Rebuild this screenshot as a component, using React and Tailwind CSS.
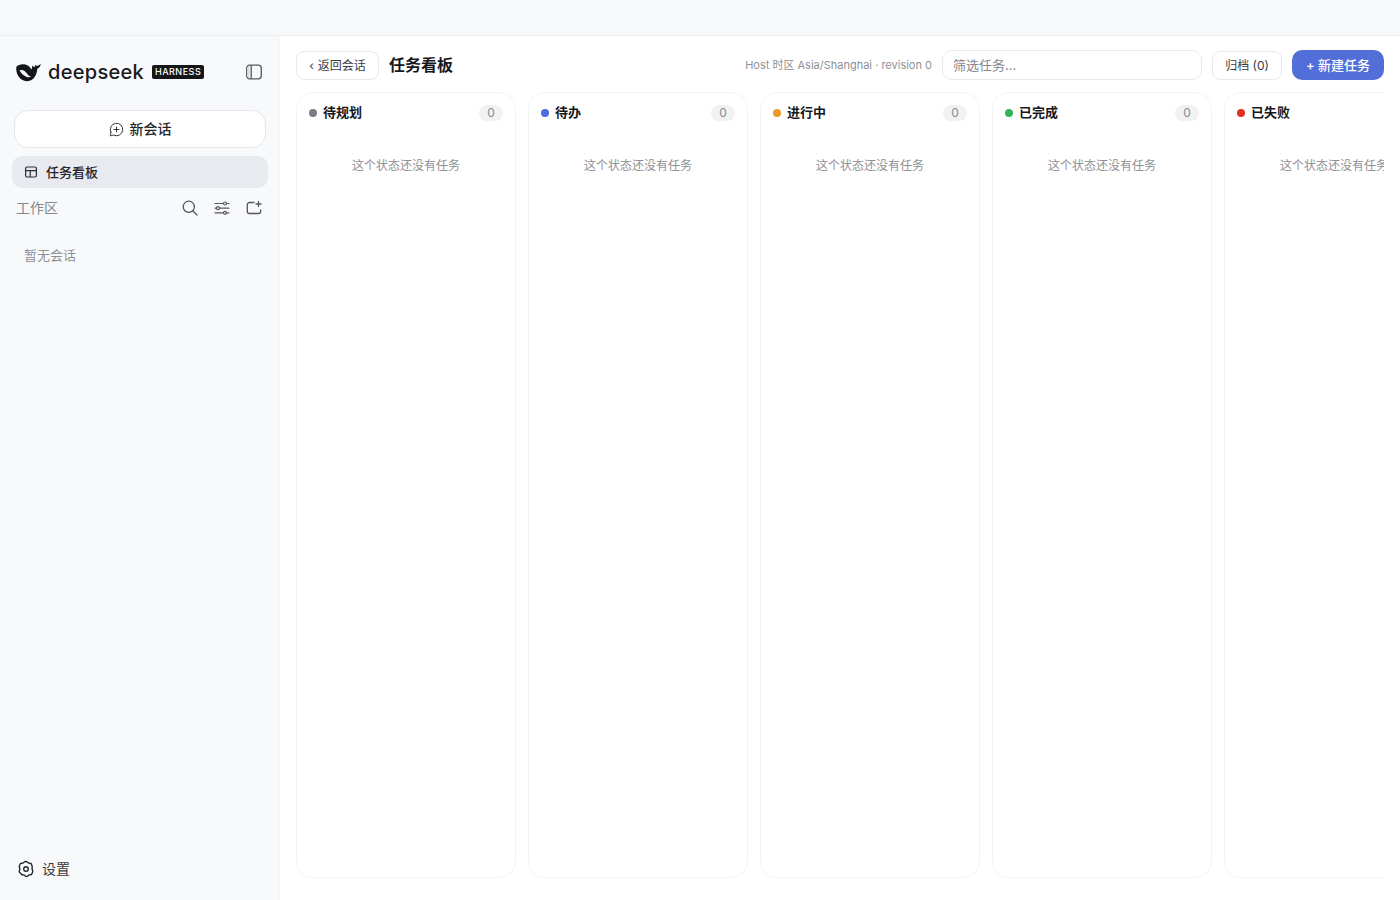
import React from 'react';
import { MessageCirclePlus } from 'lucide-react';

const FONT = "font-['Inter','Noto_Sans_CJK_SC',sans-serif]";

const columns = [
    { name: '待规划', dot: 'bg-[#7a7b85]' },
    { name: '待办', dot: 'bg-[#4f6bdc]' },
    { name: '进行中', dot: 'bg-[#ec9a2b]' },
    { name: '已完成', dot: 'bg-[#34b45a]' },
    { name: '已失败', dot: 'bg-[#e0301e]', noCount: true },
];

const WhaleLogo = () => (
    <svg width="25" height="20" viewBox="0 0 25 20" fill="none">
        <path d="M.3 5C2 2.800 5.800 1.800 9.300 2.600c2.900.7 4.800 2.400 6 4.800.8-1.200 1-2.600.7-3.900l2.300 1.800L19.500 3c.8.900 1.800 1.100 2.900.5L24.800 2c-.5 2.400-1.600 4-3.500 4.800-.2 5.400-3.500 12.400-10 12.400C5 19.200-.6 12.800.3 5Z" fill="#15161a" />
        <path d="M3.500 8.300c2.700-1 5.300.2 6.900 2.500 1.200 1.800 2.400 3.300 4.600 3.700-1.400.9-3.100 1-4.800.2C7.500 13.600 4.800 11.300 3.500 8.300Z" fill="#f7f8fb" />
    </svg>
);

const PanelIcon = () => (
    <svg width="18" height="18" viewBox="0 0 18 18" fill="none" stroke="#55565e" strokeWidth="1.300">
        <rect x="1.700" y="2.200" width="14.600" height="13.600" rx="3" />
        <path d="M6.200 2.500v13" />
        <path d="M3.400 4v10" strokeWidth="2.400" stroke="#dcdde1" />
    </svg>
);

const BoardIcon = () => (
    <svg width="14" height="14" viewBox="0 0 14 14" fill="none" stroke="#2c2d33" strokeWidth="1.200">
        <rect x="1.600" y="2" width="10.800" height="10" rx="1.500" />
        <path d="M1.600 5.600h10.800M6.200 5.600V12" />
    </svg>
);

const SearchIcon = () => (
    <svg width="18" height="18" viewBox="0 0 18 18" fill="none" stroke="#55565e" strokeWidth="1.300" strokeLinecap="round">
        <circle cx="7.800" cy="7.800" r="5.600" />
        <path d="M12 12l4 4" />
    </svg>
);

const FilterIcon = () => (
    <svg width="18" height="18" viewBox="0 0 18 18" fill="none" stroke="#55565e" strokeWidth="1.200" strokeLinecap="round">
        <path d="M2 4.500h8.500M13.500 4.500H16M2 9.200h1.500M6.500 9.200H16M2 13.800h8.500M13.500 13.800H16" />
        <circle cx="12" cy="4.500" r="1.500" />
        <circle cx="5" cy="9.200" r="1.500" />
        <circle cx="12" cy="13.800" r="1.500" />
    </svg>
);

const NewFolderIcon = () => (
    <svg width="18" height="18" viewBox="0 0 18 18" fill="none" stroke="#55565e" strokeWidth="1.300" strokeLinecap="round">
        <path d="M9 3.500H4.500A2.200 2.200 0 0 0 2.300 5.700v6.600a2.200 2.200 0 0 0 2.200 2.200h9a2.200 2.200 0 0 0 2.200-2.200V11" />
        <path d="M13.500 2.500v5M11 5h5" />
    </svg>
);

const GearIcon = () => (
    <svg width="18" height="18" viewBox="0 0 18 18" fill="none" stroke="#25262b" strokeWidth="1.400" strokeLinejoin="round">
        <path d="M9 1.500c.6 0 1 .3 1.500.7l1 .9 1.500.1c.6 0 1.100.4 1.300.9l.8 1.900c.2.500.2 1 0 1.400L15.100 9l.5 1.600c.2.500.2 1 0 1.400l-.8 1.900c-.2.500-.7.900-1.300.9l-1.500.1-1 .9c-.5.400-.9.700-1.500.7s-1-.3-1.500-.7l-1-.9-1.500-.1c-.6 0-1.100-.4-1.300-.9L2.400 12c-.2-.4-.2-.9 0-1.400L2.900 9l-.5-1.600c-.2-.4-.2-.9 0-1.400l.8-1.900c.2-.5.7-.9 1.300-.9L6 3.100l1-.9c.5-.4.9-.7 1.500-.7Z" />
        <circle cx="9" cy="9" r="2.300" />
    </svg>
);

const Column = ({ name, dot, noCount }) => (
    <div className="w-[220px] shrink-0 rounded-2xl border border-[#f3f4f5] bg-white">
        <div className="flex h-[39px] items-center pl-3 pr-3">
            <span className={`h-2 w-2 rounded-full ${dot}`} />
            <span className="ml-[6px] text-[13px] font-semibold text-[#17181c]">{name}</span>
            {!noCount && (
                <span className="ml-auto flex h-4 w-6 items-center justify-center rounded-full bg-[#f1f2f4] text-xs text-[#8a8b93]">0</span>
            )}
        </div>
        <div className="mt-6 whitespace-nowrap text-center text-xs leading-5 text-[#8f9096]">这个状态还没有任务</div>
    </div>
);

const App = () => {
    return (
        <div className={`flex h-[900px] w-[1400px] flex-col overflow-hidden bg-white ${FONT}`}>
            <div className="h-9 shrink-0 border-b border-[#eff0f2] bg-[#f7f8fa]" />
            <div className="flex min-h-0 flex-1">
                <aside className="flex w-[280px] shrink-0 flex-col border-r border-[#f3f4f6] bg-[#f8f9fb]">
                    <div className="mt-[24px] flex h-6 items-center pl-4 pr-4">
                        <WhaleLogo />
                        <span className="ml-[7px] text-xl font-medium leading-6 tracking-[0.3px] text-[#17181c]">deepseek</span>
                        <span className="ml-2 flex h-[14px] w-[52px] items-center justify-center rounded-[2px] bg-[#15161a] text-[9px] font-medium tracking-[0.5px] text-white">HARNESS</span>
                        <span className="ml-auto"><PanelIcon /></span>
                    </div>
                    <button className="ml-[14px] mr-[13px] mt-[26px] flex h-[38px] items-center justify-center gap-[6px] rounded-[14px] border border-[#e6e7ea] bg-white text-sm font-medium text-[#25262b]">
                        <MessageCirclePlus size={15} strokeWidth={1.500} />
                        新会话
                    </button>
                    <div className="ml-3 mr-[11px] mt-2 flex h-8 items-center gap-2 rounded-[10px] bg-[#e9eaef] pl-3 text-[13px] font-medium text-[#25262b]">
                        <BoardIcon />
                        <span className="pt-[1px]">任务看板</span>
                    </div>
                    <div className="mt-1 flex h-8 items-center pl-4 pr-4 text-sm text-[#85868d]">
                        <span>工作区</span>
                        <div className="ml-auto flex items-center gap-[14px]">
                            <SearchIcon />
                            <FilterIcon />
                            <NewFolderIcon />
                        </div>
                    </div>
                    <div className="mt-[21px] pl-6 text-[13px] leading-5 text-[#8f9096]">暂无会话</div>
                    <div className="mt-auto mb-[21px] flex h-5 items-center gap-[7px] pl-[17px] text-sm text-[#3a3b41]">
                        <GearIcon />
                        设置
                    </div>
                </aside>
                <main className="flex min-w-0 flex-1 flex-col px-4 pt-[14px]">
                    <div className="flex h-[30px] items-center">
                        <button className="flex h-[29px] w-[83px] items-center justify-center gap-1 rounded-[8px] border border-[#e8e9ec] bg-white pt-[2px] text-xs text-[#3a3b41]">
                            <span>‹</span>
                            返回会话
                        </button>
                        <h1 className="ml-[10px] text-base font-semibold text-[#17181c]">任务看板</h1>
                        <span className="ml-auto text-[11px] text-[#8f9096]">Host 时区 Asia/Shanghai · revision 0</span>
                        <input
                            placeholder="筛选任务..."
                            className="ml-[10px] h-[30px] w-[260px] rounded-[10px] border border-[#e8e9ec] bg-white px-[10px] text-[13px] outline-none placeholder:text-[#85868d]"
                        />
                        <button className="ml-[10px] flex h-[29px] w-[70px] items-center justify-center rounded-[8px] border border-[#e8e9ec] bg-white pt-[2px] text-xs text-[#3a3b41]">归档 (0)</button>
                        <button className="ml-[10px] flex h-[30px] w-[92px] items-center justify-center rounded-[10px] bg-[#526fd9] pt-[1px] text-[13px] font-medium text-white">+ 新建任务</button>
                    </div>
                    <div className="mt-3 flex min-h-0 flex-1 gap-3 overflow-hidden pb-[22px]">
                        {columns.map(c => <Column key={c.name} {...c} />)}
                    </div>
                </main>
            </div>
        </div>
    );
};

export default App;
